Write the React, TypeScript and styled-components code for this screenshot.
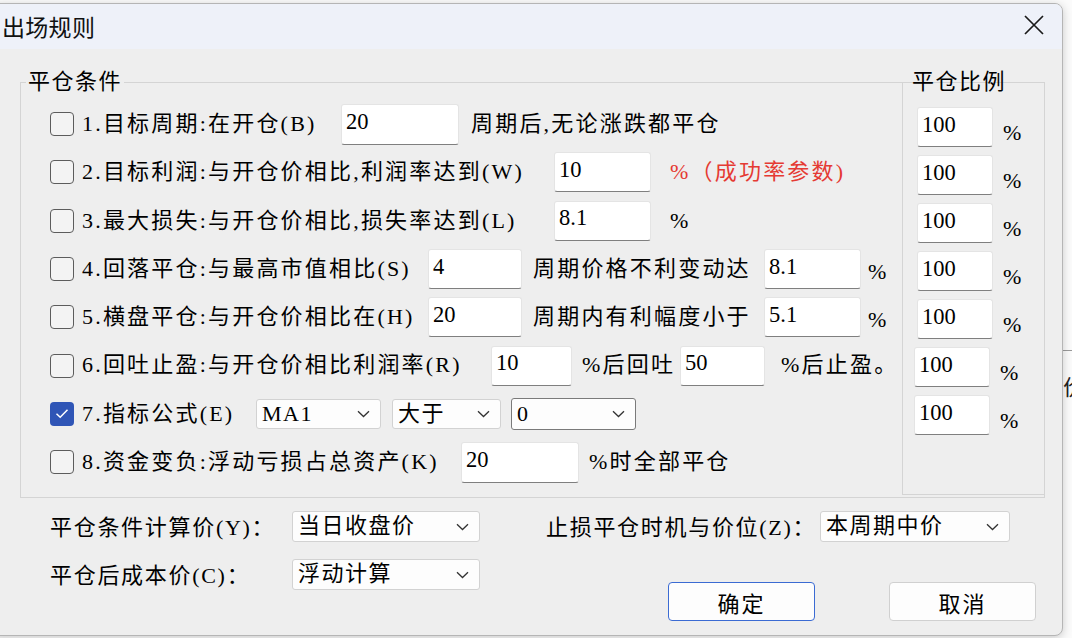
import React from 'react';
import styled, { createGlobalStyle } from 'styled-components';

const GlobalStyle = createGlobalStyle`
  html, body {
    margin: 0;
    padding: 0;
  }
  body {
    width: 1072px;
    height: 638px;
    overflow: hidden;
    font-family: "Liberation Serif", "Noto Sans CJK SC", serif;
    line-height: 1.2;
    color: #000;
  }
`;

const SERIF = `"Liberation Serif", "Noto Sans CJK SC", serif`;

type Part =
  | { kind: 'field'; value: string; w: number; h?: number; ml?: number }
  | { kind: 'text'; value: string; ml?: number; w?: number; red?: boolean; low?: boolean }
  | { kind: 'select'; value: string; w: number; h: number; ml?: number; focus?: boolean };

interface RuleRow {
  id: number;
  checked?: boolean;
  label: string;
  labelW: number;
  parts: Part[];
}

const rules: RuleRow[] = [
  {
    id: 1,
    label: '1.目标周期:在开仓(B)',
    labelW: 259,
    parts: [
      { kind: 'field', value: '20', w: 118, h: 41 },
      { kind: 'text', value: '周期后,无论涨跌都平仓', ml: 12 },
    ],
  },
  {
    id: 2,
    label: '2.目标利润:与开仓价相比,利润率达到(W)',
    labelW: 472,
    parts: [
      { kind: 'field', value: '10', w: 97 },
      { kind: 'text', value: '%（成功率参数)', ml: 19, red: true },
    ],
  },
  {
    id: 3,
    label: '3.最大损失:与开仓价相比,损失率达到(L)',
    labelW: 472,
    parts: [
      { kind: 'field', value: '8.1', w: 97 },
      { kind: 'text', value: '%', ml: 19 },
    ],
  },
  {
    id: 4,
    label: '4.回落平仓:与最高市值相比(S)',
    labelW: 346,
    parts: [
      { kind: 'field', value: '4', w: 94 },
      { kind: 'text', value: '周期价格不利变动达', ml: 11, w: 231 },
      { kind: 'field', value: '8.1', w: 97 },
      { kind: 'text', value: '%', ml: 7, low: true },
    ],
  },
  {
    id: 5,
    label: '5.横盘平仓:与开仓价相比在(H)',
    labelW: 346,
    parts: [
      { kind: 'field', value: '20', w: 94 },
      { kind: 'text', value: '周期内有利幅度小于', ml: 11, w: 231 },
      { kind: 'field', value: '5.1', w: 97 },
      { kind: 'text', value: '%', ml: 7, low: true },
    ],
  },
  {
    id: 6,
    label: '6.回吐止盈:与开仓价相比利润率(R)',
    labelW: 409,
    parts: [
      { kind: 'field', value: '10', w: 81 },
      { kind: 'text', value: '%后回吐', ml: 10, w: 98 },
      { kind: 'field', value: '50', w: 85 },
      { kind: 'text', value: '%后止盈。', ml: 16 },
    ],
  },
  {
    id: 7,
    checked: true,
    label: '7.指标公式(E)',
    labelW: 174,
    parts: [
      { kind: 'select', value: 'MA1', w: 125, h: 30 },
      { kind: 'select', value: '大于', w: 109, h: 30, ml: 11 },
      { kind: 'select', value: '0', w: 125, h: 32, ml: 10, focus: true },
    ],
  },
  {
    id: 8,
    label: '8.资金变负:浮动亏损占总资产(K)',
    labelW: 379,
    parts: [
      { kind: 'field', value: '20', w: 118, h: 41 },
      { kind: 'text', value: '%时全部平仓', ml: 10 },
    ],
  },
];

const ratios = [
  { id: 1, shift: false },
  { id: 2, shift: false },
  { id: 3, shift: false },
  { id: 4, shift: false },
  { id: 5, shift: false },
  { id: 6, shift: true },
  { id: 7, shift: true },
];

const Chevron: React.FC = () => (
  <ChevronSvg width="13" height="8" viewBox="0 0 13 8">
    <path d="M1 1.2 L6.5 6.5 L12 1.2" fill="none" stroke="#333" strokeWidth="1.3" />
  </ChevronSvg>
);

const CheckMark: React.FC = () => (
  <svg width="14" height="11" viewBox="0 0 14 11">
    <path d="M1.5 5.8 L5.2 9.2 L12.5 1.8" fill="none" stroke="#fff" strokeWidth="1.5" />
  </svg>
);

const renderPart = (p: Part, i: number) => {
  if (p.kind === 'field') {
    return (
      <Field key={i} $w={p.w} $h={p.h ?? 40} $ml={p.ml ?? 0}>
        {p.value}
      </Field>
    );
  }
  if (p.kind === 'select') {
    return (
      <Select key={i} $w={p.w} $h={p.h} $ml={p.ml ?? 0} $focus={!!p.focus}>
        <span>{p.value}</span>
        <Chevron />
      </Select>
    );
  }
  return (
    <Note key={i} $ml={p.ml ?? 0} $w={p.w} $red={!!p.red} $low={!!p.low}>
      {p.value}
    </Note>
  );
};

const App: React.FC = () => {
  return (
    <Desktop>
      <GlobalStyle />
      <RightPeek>价格</RightPeek>

      <Dialog>
        <TitleBar>
          <Title>出场规则</Title>
          <CloseButton>
            <svg width="20" height="20" viewBox="0 0 20 20">
              <path d="M1 1 L19 19 M19 1 L1 19" stroke="#1a1a1a" strokeWidth="1.7" />
            </svg>
          </CloseButton>
        </TitleBar>

        <Body>
          <Group>
            <GroupLegend>平仓条件</GroupLegend>
            <GroupInner>
              <Rows>
                {rules.map(r => (
                  <Row key={r.id}>
                    <CheckBox $checked={!!r.checked}>{r.checked && <CheckMark />}</CheckBox>
                    <RowLabel $w={r.labelW}>{r.label}</RowLabel>
                    {r.parts.map(renderPart)}
                  </Row>
                ))}
              </Rows>

              <RatioGroup>
                <RatioLegend>平仓比例</RatioLegend>
                <RatioList>
                  {ratios.map(r => (
                    <RatioRow key={r.id} $shift={r.shift}>
                      <Field $w={76} $h={40} $ml={0}>
                        100
                      </Field>
                      <Pct>%</Pct>
                    </RatioRow>
                  ))}
                </RatioList>
              </RatioGroup>
            </GroupInner>
          </Group>

          <Footer>
            <LeftCol>
              <FormRow>
                <FormLabel $w={242}>平仓条件计算价(Y)：</FormLabel>
                <Select $w={188} $h={31} $ml={0} $focus={false}>
                  <span>当日收盘价</span>
                  <Chevron />
                </Select>
              </FormRow>
              <FormRow>
                <FormLabel $w={242}>平仓后成本价(C)：</FormLabel>
                <Select $w={188} $h={31} $ml={0} $focus={false}>
                  <span>浮动计算</span>
                  <Chevron />
                </Select>
              </FormRow>
            </LeftCol>

            <RightCol>
              <FormRow>
                <FormLabel $w={274}>止损平仓时机与价位(Z)：</FormLabel>
                <Select $w={190} $h={31} $ml={0} $focus={false}>
                  <span>本周期中价</span>
                  <Chevron />
                </Select>
              </FormRow>
              <Buttons>
                <Button $primary>确定</Button>
                <Button>取消</Button>
              </Buttons>
            </RightCol>
          </Footer>
        </Body>
      </Dialog>
    </Desktop>
  );
};

export default App;

const Desktop = styled.div`
  position: relative;
  width: 1072px;
  height: 638px;
  overflow: hidden;
  background: #fbfbfb;
  display: flex;
  flex-direction: column;
`;

const RightPeek = styled.div`
  align-self: flex-end;
  width: 9px;
  margin-top: 350px;
  padding-top: 24px;
  border-top: 1px solid #9a9a9a;
  overflow: hidden;
  white-space: nowrap;
  font-size: 22px;
  color: #222;
`;

const Dialog = styled.div`
  position: absolute;
  left: -8px;
  top: 3px;
  width: 1071px;
  height: 633px;
  box-sizing: border-box;
  background: #eeeeee;
  border: 1px solid #b5b5b5;
  border-radius: 8px;
  box-shadow: 0 2px 10px rgba(0, 0, 0, 0.2);
  overflow: hidden;
  display: flex;
  flex-direction: column;
`;

const TitleBar = styled.div`
  flex-shrink: 0;
  height: 45px;
  background: #eef1f9;
  display: flex;
  align-items: center;
  justify-content: space-between;
  padding: 0 18px 0 9px;
`;

const Title = styled.div`
  font-family: "Noto Sans CJK SC", sans-serif;
  font-size: 23px;
  color: #111;
  letter-spacing: 0.3px;
`;

const CloseButton = styled.div`
  display: flex;
  width: 20px;
  height: 20px;
  margin-top: -3px;
`;

const Body = styled.div`
  flex: 1;
  padding-left: 27px;
`;

const Group = styled.fieldset`
  margin: 21px 0 0 0;
  width: 1025px;
  height: 428px;
  box-sizing: border-box;
  border: 1px solid #d4d4d4;
  padding: 0 0 0 5px;
  min-width: 0;
`;

const GroupLegend = styled.legend`
  font-size: 22px;
  line-height: 24px;
  padding: 0 2px;
  letter-spacing: 1.5px;
`;

const GroupInner = styled.div`
  display: flex;
  margin-left: 24px;
`;

const Rows = styled.div`
  flex: 1;
  padding-top: 6px;
`;

const Row = styled.div`
  display: flex;
  align-items: center;
  height: 48.3px;
  font-size: 22px;
  letter-spacing: 2.2px;
  white-space: nowrap;
`;

const CheckBox = styled.span<{ $checked: boolean }>`
  flex-shrink: 0;
  width: 24px;
  height: 24px;
  box-sizing: border-box;
  border-radius: 4px;
  border: ${({ $checked }) => ($checked ? 'none' : '1.5px solid #5c5c5c')};
  background: ${({ $checked }) => ($checked ? '#2f55b6' : '#f3f3f3')};
  display: flex;
  align-items: center;
  justify-content: center;
`;

const RowLabel = styled.span<{ $w: number }>`
  flex-shrink: 0;
  width: ${({ $w }) => $w}px;
  margin-left: 8px;
  overflow: visible;
`;

const Field = styled.div<{ $w: number; $h: number; $ml: number }>`
  flex-shrink: 0;
  width: ${({ $w }) => $w}px;
  height: ${({ $h }) => $h}px;
  margin-left: ${({ $ml }) => $ml}px;
  box-sizing: border-box;
  background: #fff;
  border: 1px solid #e4e4e4;
  border-bottom: 1.5px solid #7f7f7f;
  border-radius: 3px;
  padding: 0 4px 6px 4px;
  display: flex;
  align-items: center;
  font-family: "Liberation Serif", serif;
  font-size: 22.5px;
  letter-spacing: 0;
  color: #000;
`;

const Note = styled.span<{ $ml: number; $w?: number; $red: boolean; $low: boolean }>`
  flex-shrink: 0;
  margin-left: ${({ $ml }) => $ml}px;
  width: ${({ $w }) => ($w ? `${$w}px` : 'auto')};
  color: ${({ $red }) => ($red ? '#e53a33' : '#000')};
  padding-top: ${({ $low }) => ($low ? '6px' : '0')};
`;

const Select = styled.div<{ $w: number; $h: number; $ml: number; $focus: boolean }>`
  flex-shrink: 0;
  width: ${({ $w }) => $w}px;
  height: ${({ $h }) => $h}px;
  margin-left: ${({ $ml }) => $ml}px;
  box-sizing: border-box;
  background: #fdfdfd;
  border: 1px solid ${({ $focus }) => ($focus ? '#7a7a7a' : '#d2d2d2')};
  border-radius: 3px;
  display: flex;
  align-items: center;
  padding: 0 10px 0 5px;
  font-family: ${SERIF};
  font-size: 22px;
  letter-spacing: 1.5px;
  color: #000;
  white-space: nowrap;
`;

const ChevronSvg = styled.svg`
  margin-left: auto;
  flex-shrink: 0;
`;

const RatioGroup = styled.fieldset`
  flex-shrink: 0;
  margin: -24px -1px 0 0;
  width: 143px;
  height: 425px;
  box-sizing: border-box;
  border: 1px solid #d4d4d4;
  padding: 0 0 0 8px;
  min-width: 0;
`;

const RatioLegend = styled.legend`
  font-size: 22px;
  line-height: 24px;
  padding: 0 1px;
  letter-spacing: 1.5px;
`;

const RatioList = styled.div`
  display: flex;
  flex-direction: column;
  gap: 8px;
  padding-top: 13px;
  margin-left: 6px;
`;

const RatioRow = styled.div<{ $shift: boolean }>`
  display: flex;
  align-items: center;
  gap: 10px;
  margin-left: ${({ $shift }) => ($shift ? '-3px' : '0')};
`;

const Pct = styled.span`
  font-size: 22px;
  padding-top: 12px;
`;

const Footer = styled.div`
  display: flex;
  gap: 66px;
  margin: 13px 0 0 30px;
`;

const LeftCol = styled.div`
  display: flex;
  flex-direction: column;
  gap: 17px;
`;

const RightCol = styled.div`
  display: flex;
  flex-direction: column;
  width: 490px;
`;

const FormRow = styled.div`
  display: flex;
  align-items: center;
  height: 31px;
`;

const FormLabel = styled.span<{ $w: number }>`
  flex-shrink: 0;
  width: ${({ $w }) => $w}px;
  font-size: 22px;
  letter-spacing: 1.7px;
  white-space: nowrap;
  padding-top: 4px;
`;

const Buttons = styled.div`
  display: flex;
  justify-content: flex-end;
  gap: 74px;
  margin-top: 40px;
`;

const Button = styled.button<{ $primary?: boolean }>`
  width: 147px;
  height: 39px;
  box-sizing: border-box;
  background: #fdfdfd;
  border: 1px solid ${({ $primary }) => ($primary ? '#3b6bd3' : '#d0d0d0')};
  border-radius: 4px;
  font-family: ${SERIF};
  font-size: 22px;
  letter-spacing: 2px;
  color: #000;
  padding: 0;
`;
